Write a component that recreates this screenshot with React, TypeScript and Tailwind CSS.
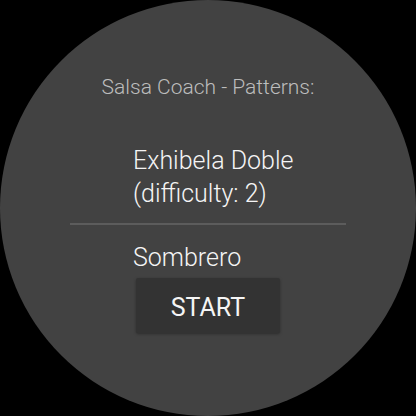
export default function App() {
  return (
    <div className="w-[416px] h-[416px] bg-black" style={{ fontFamily: "Roboto, 'Liberation Sans', sans-serif" }}>
      <div className="w-[416px] h-[416px] rounded-full bg-[#424242] flex flex-col pt-[75px]">
        <div className="text-center text-[21px] leading-[24px] font-light text-[#bdbdbd]">
          Salsa Coach - Patterns:
        </div>
        <div className="pl-[133px] mt-[45px] text-[25px] leading-[33px] font-light text-[#f5f5f5]">
          <div>Exhibela Doble</div>
          <div>(difficulty: 2)</div>
        </div>
        <div className="mx-[70px] mt-[13px] h-[2px] bg-[#5c5c5c]" />
        <div className="pl-[133px] mt-[17px] text-[25px] leading-[32px] font-light text-[#f5f5f5]">
          Sombrero
        </div>
        <div className="flex justify-center mt-[4px]">
          <button className="w-[144px] h-[55px] pt-[4px] rounded-[2px] bg-[#333333] shadow-[0_1px_3px_rgba(0,0,0,0.35)] text-[25px] text-[#f5f5f5] font-normal">
            START
          </button>
        </div>
      </div>
    </div>
  );
}
